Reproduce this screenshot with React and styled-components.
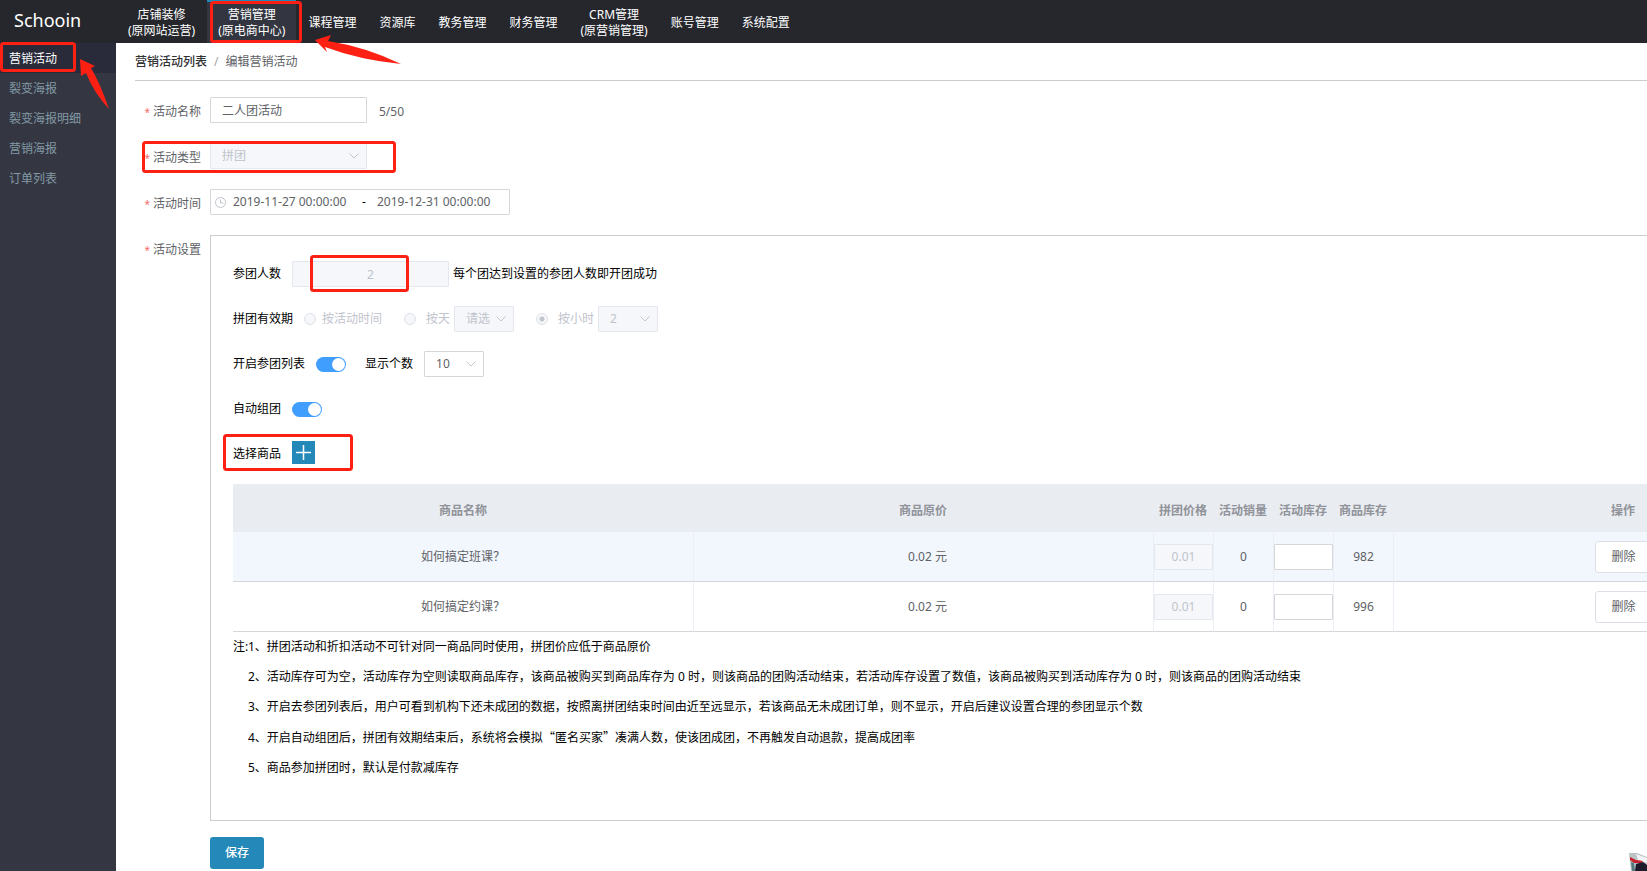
import React from "react";
import styled, { createGlobalStyle, css } from "styled-components";

const GlobalStyle = createGlobalStyle`
  * { box-sizing: border-box; }
  body {
    margin: 0;
    background: #fff;
    color: #000;
    font: 12px/16px "Noto Sans", "Noto Sans CJK SC", sans-serif;
  }
  button, input, select { font: inherit; margin: 0; }
`;

const Page = styled.div`
  position: relative;
  display: flex;
  flex-direction: column;
  min-height: 100vh;
  overflow: hidden;
`;

const Header = styled.header`
  display: flex;
  height: 43px;
  background: #26272d;
  color: #fff;
`;

const Logo = styled.div`
  flex: none;
  width: 117px;
  padding-left: 14px;
  font-size: 18px;
  line-height: 40px;
`;

const Nav = styled.nav`
  display: flex;
  gap: 1px;
`;

const NavItem = styled.a`
  display: flex;
  flex-direction: column;
  align-items: center;
  justify-content: center;
  padding: 0 11px;
  border-top: 2px solid ${(p) => (p.$active ? "#2489b8" : "transparent")};
  background: ${(p) => (p.$active ? "#333640" : "transparent")};
  color: #fff;
  text-decoration: none;
  white-space: nowrap;
`;

const Body = styled.div`
  display: flex;
  flex: 1;
`;

const Sidebar = styled.nav`
  flex: none;
  width: 116px;
  background: #343742;
`;

const SideItem = styled.a`
  display: block;
  padding: 1px 0 0 9px;
  line-height: 29px;
  background: ${(p) => (p.$active ? "#292b3b" : "transparent")};
  color: ${(p) => (p.$active ? "#fff" : "#8299a5")};
  text-decoration: none;
`;

const Main = styled.main`
  flex: 1;
  min-width: 0;
  padding-left: 19px;
`;

const Breadcrumb = styled.nav`
  display: flex;
  gap: 7px;
  padding: 11px 0 10px;
  border-bottom: 1px solid #ccc;
  color: #606266;
`;

const CrumbLink = styled.a`
  color: #303133;
  font-weight: 500;
  text-decoration: none;
`;

const Slash = styled.span`
  color: #a0a4ac;
`;

const Form = styled.form`
  display: flex;
  flex-direction: column;
  gap: 16px;
  padding-top: 16px;
`;

const Field = styled.div`
  display: flex;
  align-items: flex-start;
`;

const FieldLabel = styled.label`
  flex: none;
  width: 75px;
  padding-right: 9px;
  color: #606266;
  line-height: 30px;
  text-align: right;

  &::before {
    content: "*";
    margin-right: 3px;
    color: #f56c6c;
    font-size: 10px;
  }
`;

const control = css`
  height: 26px;
  border: 1px solid ${(p) => (p.disabled ? "#e4e7ed" : "#d4d6d9")};
  border-radius: 1px;
  background: ${(p) => (p.disabled ? "#f5f7fa" : "#fff")};
  color: ${(p) => (p.disabled ? "#c0c4cc" : "#606266")};
  opacity: 1;
  outline: 0;
`;

const TextInput = styled.input`
  ${control}
  width: ${(p) => p.$width || 157}px;
  padding: 0 ${(p) => (p.$center ? 0 : 11)}px;
  text-align: ${(p) => (p.$center ? "center" : "left")};
`;

const Counter = styled.span`
  margin-left: 12px;
  color: #606266;
  line-height: 30px;
`;

const SelectWrap = styled.span`
  display: inline-grid;
  align-items: center;
  width: ${(p) => p.$width || 60}px;

  > * { grid-area: 1 / 1; }
  > svg { justify-self: end; margin-right: 8px; pointer-events: none; }
`;

const SelectBox = styled.select`
  ${control}
  width: 100%;
  padding: 0 11px;
  appearance: none;
`;

const DateRange = styled.div`
  display: flex;
  align-items: center;
  width: 300px;
  height: 26px;
  padding-left: 4px;
  border: 1px solid #d4d6d9;
  border-radius: 1px;
`;

const DateInput = styled.input`
  width: 124px;
  padding: 0;
  border: 0;
  outline: 0;
  color: #606266;
`;

const DateDash = styled.span`
  width: 20px;
  padding-left: 5px;
`;

const ClockSvg = styled.svg`
  margin-right: 7px;
`;

const Panel = styled.section`
  flex: 1;
  min-width: 1666px;
  padding: 25px 22px 37px;
  border: 1px solid #ccc;
`;

const Row = styled.div`
  display: flex;
  align-items: center;
  height: 26px;
  margin-bottom: ${(p) => p.$after || 19}px;
`;

const RowLabel = styled.label`
  margin: 0 11px 0 ${(p) => p.$before || 0}px;
`;

const Hint = styled.span`
  margin-left: 4px;
`;

const RadioLabel = styled.label`
  display: flex;
  align-items: center;
  gap: ${(p) => p.$gap || 10}px;
  margin: 0 ${(p) => p.$after || 4}px 0 ${(p) => p.$before || 0}px;
  color: #c0c4cc;
`;

const Radio = styled.input`
  appearance: none;
  width: 12px;
  height: 12px;
  border: 1px solid #dfe2e8;
  border-radius: 50%;
  background: #f5f7fa;

  &:checked {
    background: radial-gradient(circle, #c0c4cc 2px, #f5f7fa 3px);
  }
`;

const Switch = styled.input`
  appearance: none;
  display: flex;
  width: 30px;
  height: 15px;
  padding: 1px;
  border-radius: 8px;
  background: #409eff;

  &::after {
    content: "";
    width: 13px;
    height: 13px;
    margin-left: auto;
    border-radius: 50%;
    background: #fff;
  }
`;

const AddButton = styled.button`
  display: grid;
  place-items: center;
  align-self: flex-start;
  width: 23px;
  height: 23px;
  padding: 0;
  border: 0;
  background: #2489b8;
`;

const Table = styled.table`
  width: 100%;
  table-layout: fixed;
  border-collapse: separate;
  border-spacing: 0;
  color: #606266;
  text-align: center;

  th {
    height: 48px;
    padding: 5px 0 0;
    background: #e9ecf1;
    color: #909399;
    font-weight: 700;
  }
  td {
    height: 50px;
    padding: 0;
    border-bottom: 1px solid #d4d6d9;
  }
  td + td { border-left: 1px solid #ebeef5; }
  tbody tr:first-child { background: #f2f7fe; }
`;

const Col = styled.col`
  width: ${(p) => (p.$narrow ? "60px" : "auto")};
`;

const Price = styled.span`
  padding-left: 8px;
`;

const DeleteButton = styled.button`
  height: 32px;
  padding: 0 15px;
  border: 1px solid #dcdfe6;
  border-radius: 3px;
  background: #fff;
  color: #606266;
`;

const Notes = styled.div`
  display: grid;
  grid-template-columns: 15px 1fr;
  line-height: 30px;
  white-space: nowrap;

  p { grid-column: 2; margin: 0; }
`;

const Quote = styled.span`
  font-family: "Noto Sans CJK SC", sans-serif;
`;

const SaveButton = styled.button`
  align-self: flex-start;
  height: 32px;
  margin: 0 0 2px 75px;
  padding: 0 15px;
  border: 0;
  border-radius: 3px;
  background: #2489b8;
  color: #fff;
  font-weight: 500;
`;

const Marks = styled.svg`
  position: absolute;
  top: 0;
  left: 0;
  pointer-events: none;
`;

const Mascot = styled.svg`
  position: fixed;
  right: 0;
  bottom: 0;
`;

function Chevron() {
  return (
    <svg width="10" height="6" viewBox="0 0 10 6" fill="none" stroke="#c0c4cc" aria-hidden="true">
      <path d="M.5 .5 5 5 9.500 .5" />
    </svg>
  );
}

function Select({ width, value, ...rest }) {
  return (
    <SelectWrap $width={width}>
      <SelectBox defaultValue={value} {...rest}>
        <option>{value}</option>
      </SelectBox>
      <Chevron />
    </SelectWrap>
  );
}

const NAV = [
  ["店铺装修", "(原网站运营)"],
  ["营销管理", "(原电商中心)"],
  ["课程管理"],
  ["资源库"],
  ["教务管理"],
  ["财务管理"],
  ["CRM管理", "(原营销管理)"],
  ["账号管理"],
  ["系统配置"],
];
const SIDE = ["营销活动", "裂变海报", "裂变海报明细", "营销海报", "订单列表"];
const COLUMNS = ["商品名称", "商品原价", "拼团价格", "活动销量", "活动库存", "商品库存", "操作"];
const GOODS = [
  { name: "如何搞定班课？", stock: 982 },
  { name: "如何搞定约课？", stock: 996 },
];

export default function App() {
  return (
    <Page lang="zh-CN">
      <GlobalStyle />
      <Header>
        <Logo>Schooin</Logo>
        <Nav>
          {NAV.map((lines, i) => (
            <NavItem key={lines[0]} href="#" $active={i === 1}>
              {lines.map((line) => <span key={line}>{line}</span>)}
            </NavItem>
          ))}
        </Nav>
      </Header>
      <Body>
        <Sidebar>
          {SIDE.map((item, i) => (
            <SideItem key={item} href="#" $active={i === 0}>{item}</SideItem>
          ))}
        </Sidebar>
        <Main>
          <Breadcrumb>
            <CrumbLink href="#">营销活动列表</CrumbLink>
            <Slash>/</Slash>
            <span>编辑营销活动</span>
          </Breadcrumb>
          <Form onSubmit={(e) => e.preventDefault()}>
            <Field>
              <FieldLabel htmlFor="name">活动名称</FieldLabel>
              <TextInput id="name" defaultValue="二人团活动" />
              <Counter>5/50</Counter>
            </Field>
            <Field>
              <FieldLabel htmlFor="type">活动类型</FieldLabel>
              <Select id="type" width={157} value="拼团" disabled />
            </Field>
            <Field>
              <FieldLabel htmlFor="start">活动时间</FieldLabel>
              <DateRange>
                <ClockSvg width="11" height="11" viewBox="0 0 11 11" fill="none" stroke="#c0c4cc" aria-hidden="true">
                  <circle cx="5.500" cy="5.500" r="5" />
                  <path d="M5.500 2.500v3.500h3" />
                </ClockSvg>
                <DateInput id="start" defaultValue="2019-11-27 00:00:00" />
                <DateDash>-</DateDash>
                <DateInput aria-label="结束时间" defaultValue="2019-12-31 00:00:00" />
              </DateRange>
            </Field>
            <Field>
              <FieldLabel as="span">活动设置</FieldLabel>
              <Panel>
                <Row>
                  <RowLabel htmlFor="people">参团人数</RowLabel>
                  <TextInput id="people" defaultValue="2" disabled $center />
                  <Hint>每个团达到设置的参团人数即开团成功</Hint>
                </Row>
                <Row>
                  <RowLabel as="span">拼团有效期</RowLabel>
                  <RadioLabel $gap={6} $after={22}><Radio type="radio" name="valid" disabled />按活动时间</RadioLabel>
                  <RadioLabel><Radio type="radio" name="valid" disabled />按天</RadioLabel>
                  <Select aria-label="天数" value="请选" disabled />
                  <RadioLabel $before={22}><Radio type="radio" name="valid" disabled defaultChecked />按小时</RadioLabel>
                  <Select aria-label="小时数" value="2" disabled />
                </Row>
                <Row>
                  <RowLabel htmlFor="list">开启参团列表</RowLabel>
                  <Switch id="list" type="checkbox" role="switch" defaultChecked />
                  <RowLabel htmlFor="count" $before={19}>显示个数</RowLabel>
                  <Select id="count" value="10" />
                </Row>
                <Row>
                  <RowLabel htmlFor="auto">自动组团</RowLabel>
                  <Switch id="auto" type="checkbox" role="switch" defaultChecked />
                </Row>
                <Row $after={17}>
                  <RowLabel htmlFor="add">选择商品</RowLabel>
                  <AddButton id="add" type="button">
                    <svg width="15" height="15" viewBox="0 0 15 15" stroke="#fff" strokeWidth="1.500" aria-hidden="true">
                      <path d="M7.500 0v15M0 7.500h15" />
                    </svg>
                  </AddButton>
                </Row>
                <Table>
                  <colgroup>
                    {COLUMNS.map((c, i) => <Col key={c} $narrow={i > 1 && i < 6} />)}
                  </colgroup>
                  <thead>
                    <tr>{COLUMNS.map((c) => <th key={c} scope="col">{c}</th>)}</tr>
                  </thead>
                  <tbody>
                    {GOODS.map((g) => (
                      <tr key={g.name}>
                        <td>{g.name}</td>
                        <td><Price>0.02 元</Price></td>
                        <td><TextInput aria-label="拼团价格" defaultValue="0.01" disabled $center $width={59} /></td>
                        <td>0</td>
                        <td><TextInput aria-label="活动库存" $center $width={59} /></td>
                        <td>{g.stock}</td>
                        <td><DeleteButton type="button">删除</DeleteButton></td>
                      </tr>
                    ))}
                  </tbody>
                </Table>
                <Notes>
                  <span>注:</span>
                  <p>1、拼团活动和折扣活动不可针对同一商品同时使用，拼团价应低于商品原价</p>
                  <p>2、活动库存可为空，活动库存为空则读取商品库存，该商品被购买到商品库存为 0 时，则该商品的团购活动结束，若活动库存设置了数值，该商品被购买到活动库存为 0 时，则该商品的团购活动结束</p>
                  <p>3、开启去参团列表后，用户可看到机构下还未成团的数据，按照离拼团结束时间由近至远显示，若该商品无未成团订单，则不显示，开启后建议设置合理的参团显示个数</p>
                  <p>4、开启自动组团后，拼团有效期结束后，系统将会模拟<Quote>“</Quote>匿名买家<Quote>”</Quote>凑满人数，使该团成团，不再触发自动退款，提高成团率</p>
                  <p>5、商品参加拼团时，默认是付款减库存</p>
                </Notes>
              </Panel>
            </Field>
            <SaveButton type="submit">保存</SaveButton>
          </Form>
        </Main>
      </Body>
      <Marks width="420" height="480" viewBox="0 0 420 480" aria-hidden="true">
        <g fill="none" stroke="#ff2014" strokeWidth="3">
          <rect x="1.500" y="43.500" width="73" height="27" rx="2" />
          <rect x="211.500" y="2.500" width="89" height="39" rx="2" />
          <rect x="143.500" y="142.500" width="251" height="29" rx="2" />
          <rect x="311.500" y="256.500" width="96" height="34" rx="2" />
          <rect x="224.500" y="435.500" width="127" height="34" rx="2" />
        </g>
        <g fill="#ff2014">
          <path d="M80 59 95 66 91 68 Q100 83 109 109 Q94 93 86 73 L81 76Z" />
          <path d="M315 40 331 35 328 41 Q366 47 401 64 Q360 60 325 47 L327 52Z" />
        </g>
      </Marks>
      <Mascot width="18" height="18" viewBox="0 0 18 18" aria-hidden="true">
        <path d="M0 0H8L18 4V18H2Z" fill="#b9c3c6" />
        <path d="M7 1 18 5V10L9 7Z" fill="#f1f3f5" />
        <path d="M1 4 7 7 14 8 12 10 5 10 1 7Z" fill="#c8202c" />
        <path d="M2 9 5 10 6 18H3Z" fill="#56797c" />
        <path d="M7 11 14 9 18 12V18H6Z" fill="#1d1b2b" />
      </Mascot>
    </Page>
  );
}
